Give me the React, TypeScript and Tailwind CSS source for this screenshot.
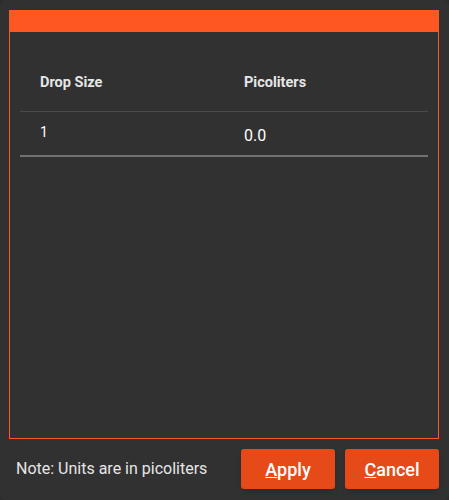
export default function App() {
  const rows = [{ size: "1", pl: "0.0" }];

  return (
    <div className="w-[449px] h-[500px] bg-[#2c2c2c]" style={{ fontFamily: "Roboto, 'Liberation Sans', sans-serif" }}>
      <div className="w-full h-full rounded-md bg-[#313131] flex flex-col pt-[10px] pl-[9px] pr-[10px] pb-[11px]">
        <div className="flex-1 flex flex-col border border-[#ff5722] border-t-0">
          <div className="h-[22px] bg-[#ff5722] -mx-px"></div>
          <div className="px-[10px] pt-[28px]">
            <div className="flex h-[52px] border-b border-[#4a4a4a] text-[14.5px] font-bold text-[#e6e6e6] pt-[12px]">
              <div className="w-[224px] pl-5">Drop Size</div>
              <div className="flex-1">Picoliters</div>
            </div>
            {rows.map((r) => (
              <div key={r.size} className="flex h-[45px] border-b-2 border-[#707070] text-[14px] text-white">
                <div className="w-[224px] pl-5 pt-[10px]">{r.size}</div>
                <div className="flex-1 pt-[12px] text-[16px]">{r.pl}</div>
              </div>
            ))}
          </div>
        </div>
        <div className="flex items-center mt-[10px]">
          <div className="flex-1 pl-[7px] text-[16px] text-[#e6e6e6]">Note: Units are in picoliters</div>
          <button className="w-[94px] h-[40px] rounded-[3px] bg-[#e64a19] text-white text-[18px] font-medium shadow-md">
            <span className="underline">A</span>pply
          </button>
          <button className="w-[94px] h-[40px] ml-[10px] rounded-[3px] bg-[#e64a19] text-white text-[18px] font-medium shadow-md">
            <span className="underline">C</span>ancel
          </button>
        </div>
      </div>
    </div>
  );
}
